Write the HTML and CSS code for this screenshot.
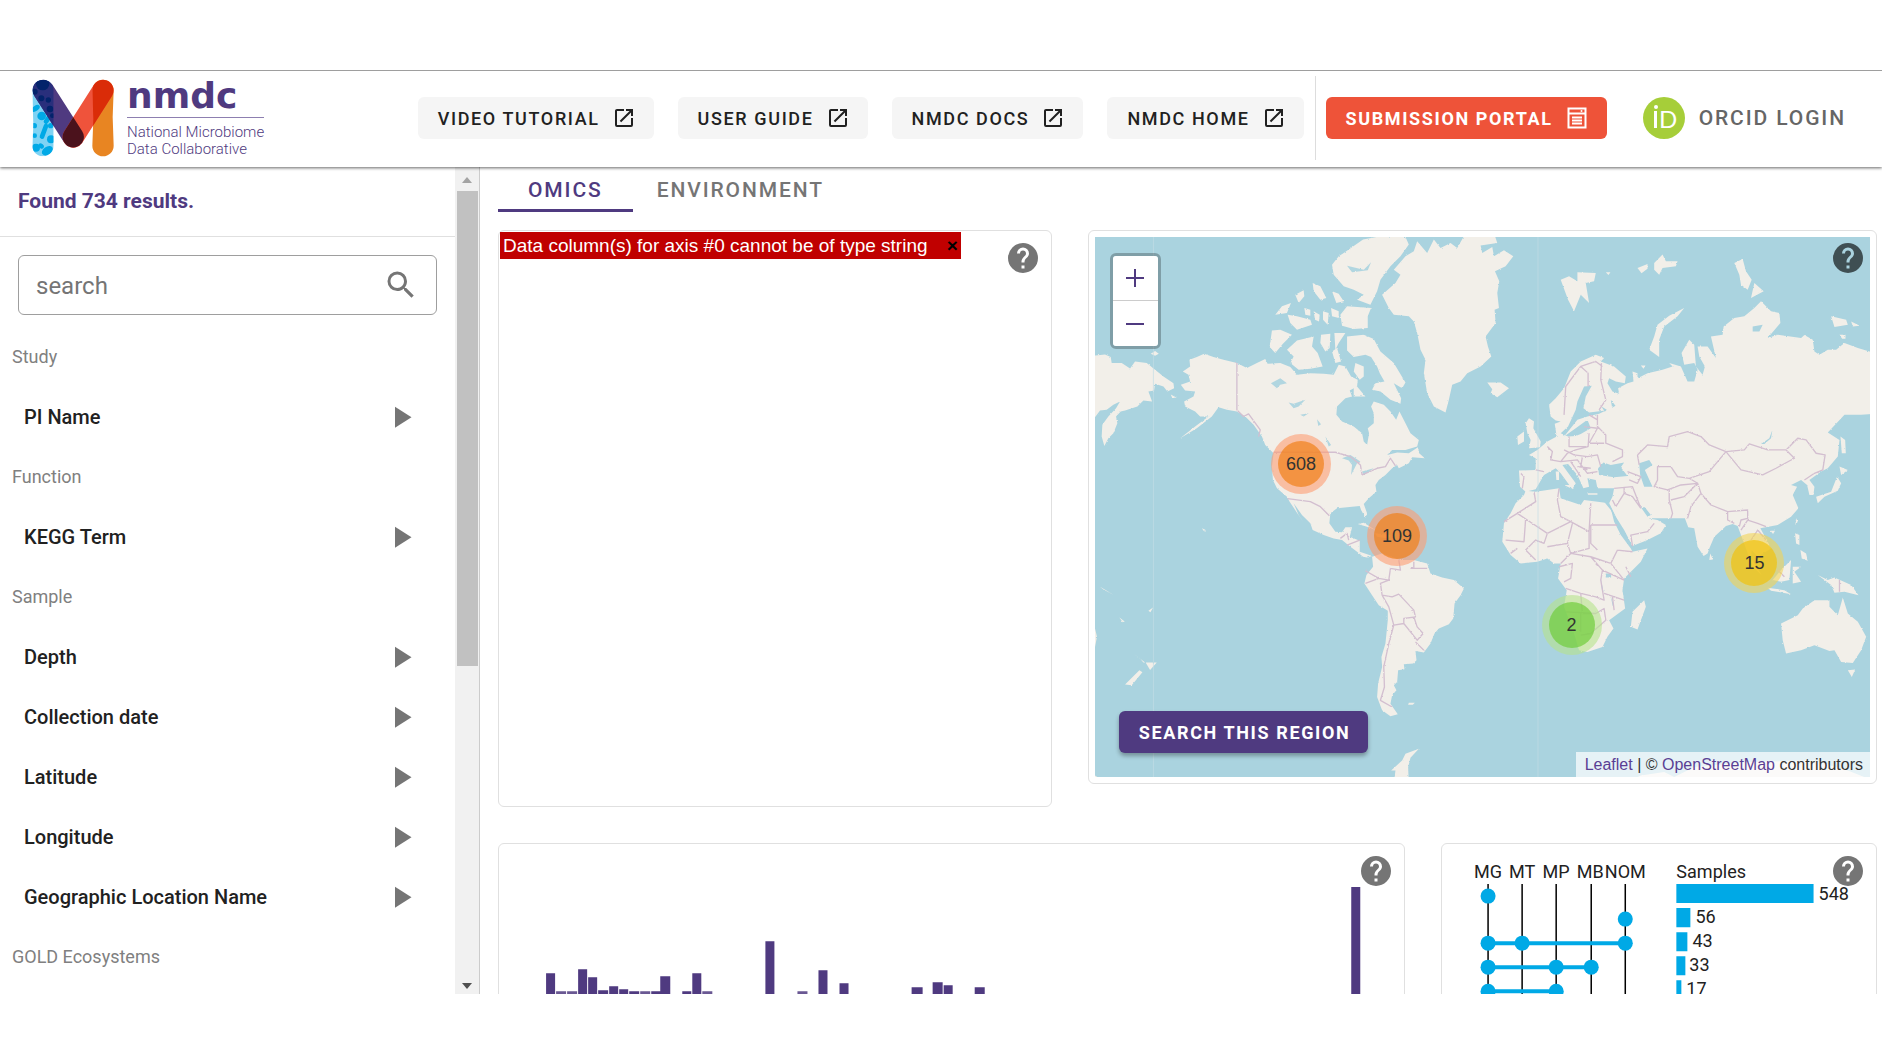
FILE: index.html
```html
<!DOCTYPE html>
<html lang="en">
<head>
<meta charset="utf-8">
<title>NMDC Data Portal</title>
<link rel="stylesheet" href="styles.css">
</head>
<body>
<svg class="defs" aria-hidden="true">
  <symbol id="open" viewBox="0 0 24 24"><path d="M14,3V5H17.59L7.76,14.83L9.17,16.24L19,6.41V10H21V3M19,19H5V5H12V3H5C3.89,3 3,3.9 3,5V19A2,2 0 0,0 5,21H19A2,2 0 0,0 21,19V12H19V19Z"/></symbol>
  <symbol id="help" viewBox="0 0 24 24"><path d="M15.07,11.25L14.17,12.17C13.45,12.89 13,13.5 13,15H11V14.5C11,13.39 11.45,12.39 12.17,11.67L13.41,10.41C13.78,10.05 14,9.55 14,9C14,7.89 13.1,7 12,7A2,2 0 0,0 10,9H8A4,4 0 0,1 12,5A4,4 0 0,1 16,9C16,9.88 15.64,10.67 15.07,11.25M13,19H11V17H13M12,2A10,10 0 0,0 2,12A10,10 0 0,0 12,22A10,10 0 0,0 22,12C22,6.47 17.5,2 12,2Z"/></symbol>
  <symbol id="play" viewBox="0 0 24 24"><path d="M8,5.14V19.14L19,12.14"/></symbol>
</svg>
<div class="app">
  <header class="topbar">
    <a class="brand" href="#">
      <svg class="mark" viewBox="96 62 246 234" aria-hidden="true">
        <defs>
          <clipPath id="pillarL"><path d="M97,96a32,32 0 0 1 64,0V262a32,32 0 0 1 -64,0l3,-60z"/></clipPath>
          <clipPath id="pillarR"><path d="M277,96a32,32 0 0 1 64,0l-3,80 3,86a32,32 0 0 1 -64,0l3,-80z"/></clipPath>
          <clipPath id="armL"><rect x="-32" y="-32" width="64" height="230" rx="32" transform="translate(130 96) rotate(-32.7)"/></clipPath>
        </defs>
        <g clip-path="url(#pillarL)">
          <rect x="96" y="62" width="66" height="234" fill="#7fd3f4"/>
          <g fill="#00a9e6">
            <circle cx="125" cy="173" r="13"/><circle cx="103" cy="202" r="8"/><circle cx="152" cy="202" r="8"/><circle cx="153" cy="243" r="12"/><circle cx="104" cy="232" r="7"/><circle cx="108" cy="268" r="12"/><ellipse cx="142" cy="277" rx="18" ry="12" transform="rotate(-35 142 277)"/><ellipse cx="107" cy="150" rx="14" ry="8" transform="rotate(-35 107 150)"/>
            <path d="M126,235L138,203M138,190L150,172M122,262l3,2" stroke="#00a9e6" stroke-width="14" stroke-linecap="round"/>
          </g>
        </g>
        <rect x="-32" y="-32" width="64" height="230" rx="32" fill="#4f3a80" transform="translate(130 96) rotate(-32.7)"/>
        <g clip-path="url(#armL)"><g clip-path="url(#pillarL)"><rect x="96" y="62" width="66" height="200" fill="#292f7c"/>
          <g fill="#03236b"><circle cx="128" cy="76" r="20"/><circle cx="104" cy="100" r="9"/><circle cx="124" cy="120" r="9"/><circle cx="145" cy="125" r="8"/><circle cx="150" cy="152" r="10"/><circle cx="157" cy="172" r="7"/></g></g></g>
        <path d="M277,96a32,32 0 0 1 64,0l-3,80 3,86a32,32 0 0 1 -64,0l3,-80z" fill="#e88522"/>
        <rect x="-32" y="-32" width="64" height="230" rx="32" fill="#ef533b" transform="translate(309 96) rotate(32.5)"/>
        <g clip-path="url(#pillarR)"><rect x="-32" y="-32" width="64" height="230" rx="32" fill="#da2c08" transform="translate(309 96) rotate(32.5)"/></g>
        <g clip-path="url(#armL)"><rect x="-32" y="-32" width="64" height="230" rx="32" fill="#4b121c" transform="translate(309 96) rotate(32.5)"/></g>
      </svg>
      <span class="brand-text"><strong>nmdc</strong><span>National Microbiome<br>Data Collaborative</span></span>
    </a>
    <nav class="links">
      <a class="btn" href="#">VIDEO TUTORIAL <svg class="i24"><use href="#open"/></svg></a>
      <a class="btn" href="#">USER GUIDE <svg class="i24"><use href="#open"/></svg></a>
      <a class="btn" href="#">NMDC DOCS <svg class="i24"><use href="#open"/></svg></a>
      <a class="btn" href="#">NMDC HOME <svg class="i24"><use href="#open"/></svg></a>
    </nav>
    <div class="account">
      <a class="btn submit" href="#">SUBMISSION PORTAL
        <svg class="i24" viewBox="0 0 24 24"><path d="M3.5,2.5h17v19h-17zM3.5,7.5h17M7,11.5h10M7,14.5h10M7,17.5h10" fill="none" stroke="#fff" stroke-width="2"/><circle cx="16.500" cy="5" r="1"/></svg></a>
      <button class="orcid" type="button">
        <svg viewBox="0 0 42 42" aria-hidden="true"><circle cx="21" cy="21" r="21" fill="#a6ce39"/><circle cx="13" cy="10" r="2" fill="#fff"/><rect x="11" y="14" width="3" height="17" fill="#fff"/><text x="16" y="31" class="orcid-d">D</text></svg>
        ORCID LOGIN</button>
    </div>
  </header>
  <div class="body">
    <aside class="sidebar">
      <div class="filters">
        <p class="found">Found 734 results.</p>
        <form class="search">
          <input id="q" type="text" placeholder="search" aria-label="search">
          <svg viewBox="0 0 24 24"><path d="M9.5,3A6.5,6.5 0 0,1 16,9.5C16,11.11 15.41,12.59 14.44,13.73L14.71,14H15.5L20.5,19L19,20.5L14,15.5V14.71L13.73,14.44C12.59,15.41 11.11,16 9.5,16A6.5,6.5 0 0,1 3,9.500A6.5,6.5 0 0,1 9.500,3M9.5,5C7,5 5,7 5,9.5C5,12 7,14 9.5,14C12,14 14,12 14,9.5C14,7 12,5 9.5,5Z"/></svg>
        </form>
        <h2>Study</h2>
        <button type="button" class="facet">PI Name<svg><use href="#play"/></svg></button>
        <h2>Function</h2>
        <button type="button" class="facet">KEGG Term<svg><use href="#play"/></svg></button>
        <h2>Sample</h2>
        <button type="button" class="facet">Depth<svg><use href="#play"/></svg></button>
        <button type="button" class="facet">Collection date<svg><use href="#play"/></svg></button>
        <button type="button" class="facet">Latitude<svg><use href="#play"/></svg></button>
        <button type="button" class="facet">Longitude<svg><use href="#play"/></svg></button>
        <button type="button" class="facet">Geographic Location Name<svg><use href="#play"/></svg></button>
        <h2>GOLD Ecosystems</h2>
      </div>
      <div class="scrollbar" aria-hidden="true"><i class="up"></i><i class="thumb"></i><i class="down"></i></div>
    </aside>
    <main class="content">
      <div class="tabs" role="tablist">
        <button type="button" role="tab" aria-selected="true" class="tab active">OMICS</button>
        <button type="button" role="tab" aria-selected="false" class="tab">ENVIRONMENT</button>
      </div>
      <div class="row first">
        <section class="card omics">
          <p class="error">Data column(s) for axis #0 cannot be of type string <b>×</b></p>
          <button class="help" type="button" aria-label="Help"><svg><use href="#help"/></svg></button>
        </section>
        <section class="card mapcard">
          <div class="map">
            <svg class="world" viewBox="45 51 2322 1620" preserveAspectRatio="xMidYMid slice" aria-hidden="true">
              <defs><filter id="coast" x="0" y="0" width="100%" height="100%"><feTurbulence type="fractalNoise" baseFrequency="0.13" numOctaves="3" seed="4"/><feDisplacementMap in="SourceGraphic" scale="6" xChannelSelector="R" yChannelSelector="G"/></filter></defs>
              <g filter="url(#coast)">
              <rect x="0" y="0" width="2420" height="1720" fill="#aad3df"/>
              <g fill="#f2efe9">
                <path d="M20,410L75,404 92,412 95,430 125,430 150,446 165,425 200,430 225,450 250,470 280,490 282,505 262,515 250,500 225,492 222,512 205,515 216,545 190,542 172,560 135,572 122,575 108,590 112,610 100,640 85,655 73,678 65,650 67,615 85,590 108,565 120,545 100,555 80,570 60,572 45,592 20,600Z"/>
                <path d="M212,402L225,394 236,402 225,408ZM272,524l18,10 -14,0z"/>
                <path d="M372,402L400,412 430,420 470,430 500,445 530,430 555,418 562,432 600,430 630,442 650,465 690,460 730,462 760,465 775,435 795,440 812,470 832,480 830,500 808,512 815,530 795,535 770,560 768,585 785,605 820,620 845,640 850,665 860,675 866,640 862,625 880,610 880,580 872,560 880,545 910,555 930,575 947,600 957,575 975,610 990,640 1015,660 1010,680 975,690 935,690 920,705 950,698 985,700 1000,690 1012,682 1016,700 1033,715 995,712 985,730 955,745 950,735 935,745 915,765 895,780 885,795 888,815 865,835 850,852 860,880 855,893 842,870 838,858 800,862 770,865 750,880 747,910 765,935 785,937 795,922 815,922 808,950 838,962 838,995 858,1002 875,1008 860,1012 848,1010 830,995 810,980 785,960 760,955 730,945 697,930 690,910 665,885 640,850 655,885 670,908 650,878 628,845 620,830 590,805 578,780 575,740 580,700 555,675 545,650 520,615 495,590 470,575 440,570 415,562 395,590 350,625 300,655 345,620 385,590 360,590 345,575 315,560 312,545 340,530 345,515 315,512 302,495 330,485 325,465 308,455 330,440 328,420 350,412Z"/>
                <path d="M832,912L850,908 885,930 860,920ZM884,940L930,945 925,955 890,950Z"/>
                <path d="M875,1010L905,1000 960,1020 1000,1020 1040,1030 1050,1060 1085,1072 1120,1080 1150,1105 1140,1125 1122,1150 1118,1195 1105,1212 1075,1225 1062,1240 1050,1270 1030,1297 1005,1292 1008,1320 998,1330 970,1332 972,1347 953,1350 950,1385 940,1395 948,1410 935,1425 930,1450 952,1482 930,1488 905,1470 890,1430 893,1390 905,1340 903,1310 915,1270 922,1200 922,1172 895,1155 875,1125 852,1090 858,1065 878,1040Z"/>
                <path d="M985,1447h18l-6,6h-14z"/>
                <path d="M975,110L1000,95 1010,65 1040,100 1060,60 1080,85 1110,70 1130,85 1150,50 1240,40 1250,70 1200,78 1205,100 1235,82 1240,110 1270,92 1298,110 1275,140 1243,155 1256,185 1250,220 1255,265 1242,270 1245,310 1215,350 1222,380 1232,410 1200,440 1160,460 1140,485 1115,495 1105,540 1095,578 1060,560 1040,520 1030,460 1035,420 1020,390 1010,340 1000,305 985,290 940,285 925,265 905,225 945,190 960,165 940,150Z"/>
                <path d="M848,60L900,50 975,52 985,75 960,110 930,140 900,180 890,215 870,255 830,240 850,225 820,210 790,200 760,165 755,135 775,110 790,100Z"/>
                <path d="M780,285L800,260 872,265 862,290 862,325 820,328 785,318ZM755,215L775,222 790,245 768,250ZM697,190L720,200 738,235 720,240 700,215ZM645,225L670,212 672,230 655,250ZM585,285L605,260 632,250 620,280ZM622,285L650,290 690,300 695,315 650,330 630,310ZM672,265L690,270 690,288 675,285ZM700,275L718,285 716,305 704,300ZM728,275L745,280 742,315 728,300ZM752,265L775,275 775,295 755,290Z"/>
                <path d="M575,332L600,330 635,345 608,372 585,400 568,382ZM620,390L650,362 700,350 695,380 712,400 727,440 690,447 655,450 630,430 640,410ZM722,345L750,342 748,385 735,395 720,370ZM762,340L795,340 775,370 765,390ZM755,395L770,385 782,425 765,430Z"/>
                <path d="M800,350L850,345 880,358 900,395 940,430 975,488 965,505 940,490 962,535 960,552 930,540 900,515 875,510 885,490 912,485 898,460 890,440 872,412 855,405 820,412 800,392ZM820,500L830,500 855,530 820,530ZM825,430L850,440 850,470 838,480 820,455Z"/>
                <path d="M140,1300l20,15 10,12 20,0 20,0 -20,22 -12,-20z" transform="translate(20 0)"/>
                <path d="M178,1350L187,1356 155,1395 135,1393ZM30,1225L45,1225 51,1250 45,1280 30,1290ZM20,1665L45,1665 60,1675 20,1680Z"/>
                <path d="M940,1690L945,1650 932,1650 965,1620 975,1600 1015,1585 990,1612 983,1640 985,1690ZM365,925l10,4 2,6 -6,-2zM205,1172l14,-10 -8,14zM118,1192l16,12 -6,2zM60,1100l40,24 -30,-16z"/>
              </g>
              <g transform="translate(1200 0)">
                <g fill="#f2efe9">
                  <path d="M20,488L60,488 85,505 50,532 30,520 35,508Z"/>
                  <path d="M205,555L225,535 250,505 270,455 300,425 345,405 370,415 360,425 400,440 435,470 432,490 405,485 385,475 380,490 395,515 415,522 412,505 440,490 458,485 455,455 470,460 470,475 500,460 545,450 575,440 565,430 600,440 620,485 640,485 650,450 640,430 610,435 602,400 625,360 640,375 645,440 665,465 672,440 655,410 650,380 680,380 705,415 690,350 725,345 728,320 760,295 790,290 820,265 840,245 870,275 895,280 898,310 860,355 890,345 960,355 970,346 995,360 1000,395 1015,405 1040,390 1065,390 1090,370 1130,385 1200,405 1200,580 1140,585 1090,585 1040,638 1075,660 1070,710 1040,745 1020,755 985,780 1000,800 997,825 985,825 978,795 960,780 930,795 948,800 935,825 952,865 930,890 890,915 862,920 838,925 860,965 870,985 830,1010 812,990 810,1015 842,1065 815,1040 795,985 780,945 770,918 755,912 735,918 700,950 685,985 680,1000 668,1008 650,980 640,925 622,922 612,895 560,895 500,895 530,900 555,915 540,940 500,960 455,978 430,930 405,890 385,850 395,830 400,805 350,805 345,780 320,775 325,800 308,805 290,765 262,732 245,735 285,790 275,808 240,760 225,745 190,765 165,808 135,815 118,800 115,752 165,750 165,715 145,705 170,690 200,665 228,650 222,612 240,605 225,602 210,590Z"/>
                  <path d="M145,595L160,605 158,625 180,665 178,682 145,685 150,660 140,640 135,610ZM110,650L130,635 130,665 112,675Z"/>
                  <path d="M135,812L165,815 235,805 240,835 300,855 310,840 385,850 390,865 400,905 420,945 450,985 455,995 500,985 480,1025 430,1075 425,1110 433,1165 385,1200 398,1225 380,1250 365,1280 320,1295 295,1290 280,1240 250,1160 258,1110 232,1075 240,1030 220,1030 200,1015 170,1025 120,1030 90,1005 65,965 70,910 90,880 105,850 130,825Z"/>
                  <path d="M490,1140L495,1160 470,1228 450,1220 455,1175ZM688,1000L696,1018 685,1020Z"/>
                  <path d="M900,1210L950,1185 965,1165 1000,1140 1045,1140 1045,1160 1070,1185 1085,1132 1100,1180 1130,1205 1155,1250 1140,1290 1115,1328 1080,1325 1060,1290 1045,1292 1000,1275 960,1290 915,1300 905,1260ZM1100,1350L1122,1348 1112,1370Z"/>
                  <path d="M1010,1065L1040,1080 1060,1072 1110,1095 1132,1125 1090,1115 1060,1118 1050,1095ZM875,1080L900,1050 930,1020 925,1080 900,1085ZM935,1040L960,1040 940,1055 960,1085 935,1090ZM860,1103L910,1110 930,1122 870,1112ZM942,940L955,945 955,975 945,970ZM958,990L975,1000 980,1022 962,1015ZM945,895L950,905 943,915ZM868,932h14l-6,10z"/>
                  <path d="M1078,650L1092,660 1094,700 1082,700ZM1075,740L1100,750 1080,765ZM1068,770L1080,790 1070,812 1030,830 1010,850 1005,830 1050,815Z"/>
                  <path d="M610,265L590,290 550,320 535,360 535,412 505,390 520,350 530,315 565,288ZM240,180L265,170 290,185 290,158 345,160 340,185 315,190 325,250 300,225 280,275 262,240ZM760,130L785,118 795,155 812,180 800,210 780,195 775,165ZM820,190L848,215 810,235ZM1050,290L1095,300 1100,315 1060,322ZM1110,305L1136,318 1115,320ZM1075,345h18v12h-10z"/>
                  <path d="M470,145l30,-12 0,14 -18,14zM520,130l25,-25 10,20 35,0 -5,15 -40,5 -10,20 -15,-15zM375,158l14,0 -6,8zM480,437h14l-6,10zM225,755h10v25h-8zM250,795h26l-6,10zM320,820h30v4h-28z"/>
                  <path d="M430,1690L480,1665 550,1655 580,1670 640,1640 800,1625 1000,1620 1100,1650 1200,1690Z"/>
                </g>
                <g fill="#aad3df">
                  <path d="M355,765L352,745 368,728 390,735 430,728 420,742 440,768 400,772ZM475,730L505,720 515,735 492,750 515,800 490,800 478,765ZM285,570L290,545 310,500 333,498 315,530 308,565 325,578 375,572 355,582 320,590 290,600 250,650 285,625 320,600 330,625 300,642 285,648 262,650 240,640 262,620Z"/>
                  <path d="M480,862L492,862 510,885 500,890ZM362,560l16,10 -6,6zM390,540l14,18 -10,6zM840,672L865,655 874,630 870,655 850,672ZM375,1060h16v12h-16zM360,1075l8,40 -4,-2zM390,1130l8,20 -2,8zM815,320l30,-5 -10,20 -20,0zM370,845L385,850 412,905 400,890 390,870Z"/>
                </g>
                <g class="borders">
                  <path d="M250,585L255,500 300,440 345,425 365,440M300,440L322,460 322,500M362,430L360,480 375,540 355,570M350,585V620L375,645 375,670 425,690 425,710 395,725M325,585L350,600M310,620L350,625 325,670M265,650V680L322,680 325,640M325,670H370M200,680L215,695 210,720 240,725 260,700 285,690 322,680M250,690L280,705 320,710 350,705 360,740M165,750L190,755M240,725L290,720 320,760 350,755M270,725L300,770M120,760L130,770 125,805M305,710L300,740 320,750M290,740L330,745M470,705L500,675 560,680 565,650 620,635 660,650 685,675 735,695 685,755 625,775 590,770 570,740 530,740 530,780 520,800 560,810 600,795 650,790M475,735L470,705M735,695L790,690 805,672 860,690 915,690 940,715 885,745 845,765 780,750 735,695M915,690L950,655 975,660 1005,700 1032,705 1025,750 1000,760 970,780M565,810L565,840 575,880 570,895M570,840L610,830 650,790 660,820 630,860 620,895M650,790L625,775M660,820L690,855 740,875 800,870 800,895 780,900 775,920M740,875V900L760,910M780,930L800,900 830,910 855,920M810,960L830,930 855,960M440,755L480,770 470,790 445,780M400,805L455,800 480,865M405,860L430,820 455,830 480,865M455,978L450,945 500,935 520,910M430,820V800M395,840l10,20"/>
                  <path d="M235,805L230,840 240,890 270,905 325,935 330,850M160,815L165,845 110,880 70,905M110,880L200,940 270,905M330,850M330,915H410M330,915V970L350,990M200,940L190,970 165,960 135,990 165,1020M75,960L130,965 135,895M110,985L90,1000M200,980L260,970 275,910M260,970L270,1000 240,1030M270,1000L325,985 325,935M270,1000L330,1010 390,1030 410,990M235,1040L275,1030 270,1075 250,1085M330,1010L365,1050 360,1080 370,1140 345,1130 300,1120 255,1105M390,1030L430,1080M365,1050L430,1080M360,1080M370,1120L430,1140M300,1120L305,1180 345,1180 370,1165 375,1200 330,1240 300,1245M255,1175L345,1180M300,1180V1235M395,1130L400,1170M410,990L455,995M435,1040L450,1070M1075,1080V1115M890,1050l20,20"/>
                </g>
              </g>
              <g fill="#aad3df"><path d="M572,490L600,475 620,490 600,495 590,505ZM625,548L640,552 675,540 655,560 640,565ZM785,715L810,705 840,725 830,730 812,765 815,735 805,722ZM845,755L880,745 850,765ZM735,650L752,675 745,680ZM660,585L685,580 670,590ZM710,598l12,15 -8,5zM800,138L850,150 872,128 862,152 815,158Z" opacity=".9"/></g>
              <g class="borders"><path d="M470,430V570L490,590 505,582 540,630 535,650M580,697H765L810,710 840,735 845,765 890,745 915,740 930,715 945,738M622,836L690,845 720,860 747,887M780,955L800,940 805,960M800,975L838,960M855,1052L895,1075 925,1080 930,1045M855,1090L895,1075M905,1125L900,1090 925,1080M905,1125L935,1130 955,1122 1000,1170 1005,1190 970,1195 970,1210 940,1215 925,1160 905,1125M1000,1190L1010,1220 1028,1240 1010,1260 970,1210M1005,1265L1030,1290M940,1215L925,1270 910,1340 912,1400 900,1440 935,1460M930,1045L960,1050 955,1020M990,1045H1040M1000,1025V1045"/></g>
              </g>
              <path d="M220,51V1671M1372,51V1671" stroke="#c3dde5" stroke-width="2"/>
            </svg>
            <div class="zoom"><button type="button" aria-label="Zoom in"><svg viewBox="0 0 18 18"><path d="M9,0V18M0,9H18"/></svg></button><button type="button" aria-label="Zoom out"><svg viewBox="0 0 18 18"><path d="M0,9H18"/></svg></button></div>
            <button type="button" class="pin large" style="left:26.6%;top:42%"><span>608</span></button>
            <button type="button" class="pin large" style="left:39%;top:55.4%"><span>109</span></button>
            <button type="button" class="pin medium" style="left:85.1%;top:60.4%"><span>15</span></button>
            <button type="button" class="pin small" style="left:61.5%;top:71.8%"><span>2</span></button>
            <button type="button" class="region">SEARCH THIS REGION</button>
            <p class="credit"><a href="#">Leaflet</a> | © <a href="#">OpenStreetMap</a> contributors</p>
          </div>
          <button class="help" type="button" aria-label="Help"><svg><use href="#help"/></svg></button>
        </section>
      </div>
      <div class="row second">
        <section class="card">
          <svg class="histogram" viewBox="0 0 904 300" aria-hidden="true">
            <path fill="#4f3a80" d="M47,129h9v60h-9zM79,125h9v60h-9zM89,133h9v60h-9zM99,146h10v40h-10zM110,142h9v40h-9zM120,145h9v40h-9zM130,147h10v40h-10zM152,147h9v40h-9zM161,132h10v60h-10zM183,147h9v40h-9zM193,129h9v60h-9zM266,97h9v90h-9zM319,126h9v60h-9zM340,139h9v50h-9zM412,143h11v50h-11zM433,138h10v50h-10zM444,141h9v50h-9zM475,143h10v50h-10zM851,43h9v150h-9z"/>
            <path fill="#6a5893" d="M57,147h10v40h-10zM68,147h10v40h-10zM141,147h10v40h-10zM203,147h10v40h-10zM298,147h10v40h-10z"/>
          </svg>
          <button class="help" type="button" aria-label="Help"><svg><use href="#help"/></svg></button>
        </section>
        <section class="card">
          <svg class="upset" viewBox="0 0 433 300">
            <path d="M46,40V300M80,40V300M114,40V300M149,40V300M183,40V300" stroke="#000" stroke-width="1.500"/>
            <g class="names"><text x="46" y="34">MG</text><text x="80" y="34">MT</text><text x="114" y="34">MP</text><text x="148" y="34">MB</text><text x="183" y="34">NOM</text></g>
            <path d="M46,99H183M46,123H149M46,147H114" stroke="#00a9e6" stroke-width="4"/>
            <g fill="#00a9e6"><circle cx="46" cy="52" r="7.500"/><circle cx="183" cy="75" r="7.500"/><circle cx="46" cy="99" r="7.500"/><circle cx="80" cy="99" r="7.500"/><circle cx="183" cy="99" r="7.500"/><circle cx="46" cy="123" r="7.500"/><circle cx="114" cy="123" r="7.500"/><circle cx="149" cy="123" r="7.500"/><circle cx="46" cy="147" r="7.500"/><circle cx="114" cy="147" r="7.500"/>
            <path d="M234,40h137v19h-137zM234,64h14v19h-14zM234,88h11v19h-11zM234,112h9v19h-9zM234,136h5v19h-5z"/></g>
            <g class="counts"><text x="234" y="34">Samples</text><text x="376" y="56">548</text><text x="253" y="79">56</text><text x="250" y="103">43</text><text x="247" y="127">33</text><text x="244" y="151">17</text></g>
          </svg>
          <button class="help" type="button" aria-label="Help"><svg><use href="#help"/></svg></button>
        </section>
      </div>
    </main>
  </div>
</div>
</body>
</html>
```
FILE: styles.css
```css
* { box-sizing: border-box; }
body { margin: 0; padding: 70px 0 65px; background: #fff; color: #212121; font-family: Roboto, "Liberation Sans", sans-serif; }
button { font: inherit; color: inherit; border: 0; background: none; padding: 0; }
a { color: inherit; text-decoration: none; }
p, h2 { margin: 0; }
svg { display: block; fill: currentColor; flex: none; }
.defs { position: absolute; width: 0; height: 0; }
.i24 { width: 24px; height: 24px; }

.app { height: calc(100vh - 135px); display: flex; flex-direction: column; overflow: hidden; }
.topbar { position: relative; z-index: 2; height: 97px; flex: none; display: flex; align-items: center; border-top: 1px solid #9e9e9e; background: #fff; padding: 0 36px 2px 32px; box-shadow: 0 1px 3px #00000099; }
.brand { display: flex; align-items: center; gap: 13px; color: #4f3a80; margin-right: auto; }
.mark { width: 82px; height: 78px; }
.brand-text { display: flex; flex-direction: column; font-size: 15px; font-weight: 300; line-height: 17px; padding-top: 2px; }
.brand-text strong { font: 700 36px/30px "DejaVu Sans", sans-serif; padding-bottom: 6px; border-bottom: 1px solid #8d7fb0; margin-bottom: 6px; }
.links { display: flex; gap: 24px; padding-right: 11px; }
.btn { display: flex; align-items: center; gap: 12px; height: 42px; padding: 0 18px 0 20px; border-radius: 6px; background: #f5f5f5; font-size: 18px; font-weight: 500; letter-spacing: .09em; white-space: nowrap; }
.account { display: flex; align-items: center; gap: 36px; height: 84px; border-left: 1px solid #ddd; padding-left: 10px; }
.submit { background: #ee5339; color: #fff; font-weight: 700; }
.orcid { display: flex; align-items: center; gap: 14px; color: #666; font-size: 21px; font-weight: 500; letter-spacing: .09em; white-space: nowrap; }
.orcid svg { width: 42px; height: 42px; }
.orcid-d { font: 400 24px Lato, sans-serif; letter-spacing: 0; fill: #fff; }

.body { display: flex; flex: 1; min-height: 0; }
.sidebar { width: 480px; flex: none; display: flex; border-right: 1px solid #ccc; }
.filters { flex: 1; overflow: hidden; }
.found { height: 70px; padding: 0 18px; border-bottom: 1px solid #e0e0e0; color: #4f3a80; font-size: 21px; font-weight: 700; line-height: 69px; }
.search { display: flex; align-items: center; height: 60px; margin: 18px 18px 12px; padding: 0 17px; border: 1px solid #9e9e9e; border-radius: 6px; color: #757575; }
.search input { flex: 1; min-width: 0; border: 0; outline: 0; padding: 2px 0 0; background: none; font: 400 24px Roboto, sans-serif; }
.search input::placeholder { color: #757575; opacity: 1; }
.search svg { width: 36px; height: 36px; }
h2 { height: 60px; padding-left: 12px; font-size: 18px; line-height: 60px; font-weight: 400; color: #808080; }
.facet { display: flex; width: 100%; height: 60px; align-items: center; justify-content: space-between; padding: 0 36px 0 24px; font-size: 20px; font-weight: 500; }
.facet svg { width: 36px; height: 36px; color: #757575; }
.scrollbar { width: 24px; display: flex; flex-direction: column; align-items: center; background: #f1f1f1; padding: 10px 0 5px; }
.scrollbar i { border: 5px solid transparent; }
.scrollbar .up { border-bottom: 6px solid #a3a3a3; border-top: 0; }
.scrollbar .thumb { width: 21px; height: 475px; margin-top: 8px; background: #c1c1c1; border: 0; }
.scrollbar .down { border-top: 6px solid #505050; border-bottom: 0; margin-top: auto; }

.content { flex: 1; min-width: 0; padding: 0 5px 0 18px; }
.tabs { display: flex; height: 45px; margin-bottom: 18px; }
.tab { padding: 3px 24px 0; color: #757575; font-size: 21px; font-weight: 500; letter-spacing: .09em; border-bottom: 3px solid transparent; }
.tab.active { color: #4f3a80; border-color: #4f3a80; padding: 3px 30px 0; }
.row { display: grid; gap: 36px; margin-bottom: 36px; align-items: start; }
.first { grid-template-columns: 553fr 788fr; }
.second { grid-template-columns: 906fr 435fr; }
.card { position: relative; border: 1px solid #e0e0e0; border-radius: 6px; min-width: 0; }
.help { position: absolute; top: 9px; right: 10px; color: #757575; }
.help svg { width: 36px; height: 36px; }
.omics { height: 577px; padding: 1px; }
.error { display: inline-block; background: #c00000; color: #fff; font: 19px/27px "Liberation Sans", Arial, sans-serif; padding: 0 3px; white-space: nowrap; }
.error b { color: #000; padding-left: 14px; }
.mapcard { padding: 6px; }
.mapcard .help { color: #000000a0; }
.map { position: relative; height: 540px; overflow: hidden; background: #aad3df; font-family: "Liberation Sans", Arial, sans-serif; }
.world { width: 100%; height: 100%; }
.borders { fill: none; stroke: #d3bfd0; stroke-width: 4; stroke-linejoin: round; }
.zoom { position: absolute; left: 15px; top: 16px; border: 3px solid #00000040; border-radius: 6px; background-clip: padding-box; }
.zoom button { display: flex; align-items: center; justify-content: center; width: 45px; height: 45px; background: #fff; color: #4f3a80; border-radius: 0 0 3px 3px; }
.zoom button:first-child { border-bottom: 1px solid #ccc; border-radius: 3px 3px 0 0; }
.zoom svg { width: 18px; height: 18px; stroke: currentColor; stroke-width: 2; }
.pin { position: absolute; width: 60px; height: 60px; margin: -30px 0 0 -30px; padding: 7px; border-radius: 50%; font-size: 18px; color: #333; }
.pin span { display: block; width: 46px; line-height: 46px; border-radius: 50%; }
.large { background: #fd9c7399; } .large span { background: #f18017b0; }
.medium { background: #f1d35799; } .medium span { background: #f0c20cb0; }
.small { background: #b5e28c99; } .small span { background: #6ecc39b0; }
.region { position: absolute; left: 24px; bottom: 24px; height: 42px; padding: 0 18px 0 20px; border-radius: 6px; background: #4f3a80; color: #fff; font: 700 18px Roboto, sans-serif; letter-spacing: .09em; box-shadow: 0 3px 4px #00000050; white-space: nowrap; }
.credit { position: absolute; right: 0; bottom: 0; height: 25px; padding: 0 7px 0 9px; background: #ffffffb3; color: #333; font-size: 16px; line-height: 25px; white-space: nowrap; }
.credit a { color: #5a3f94; }
.histogram, .upset { width: 100%; height: auto; }
.names, .counts { font-size: 18px; fill: #212121; }
.names { text-anchor: middle; }
```
